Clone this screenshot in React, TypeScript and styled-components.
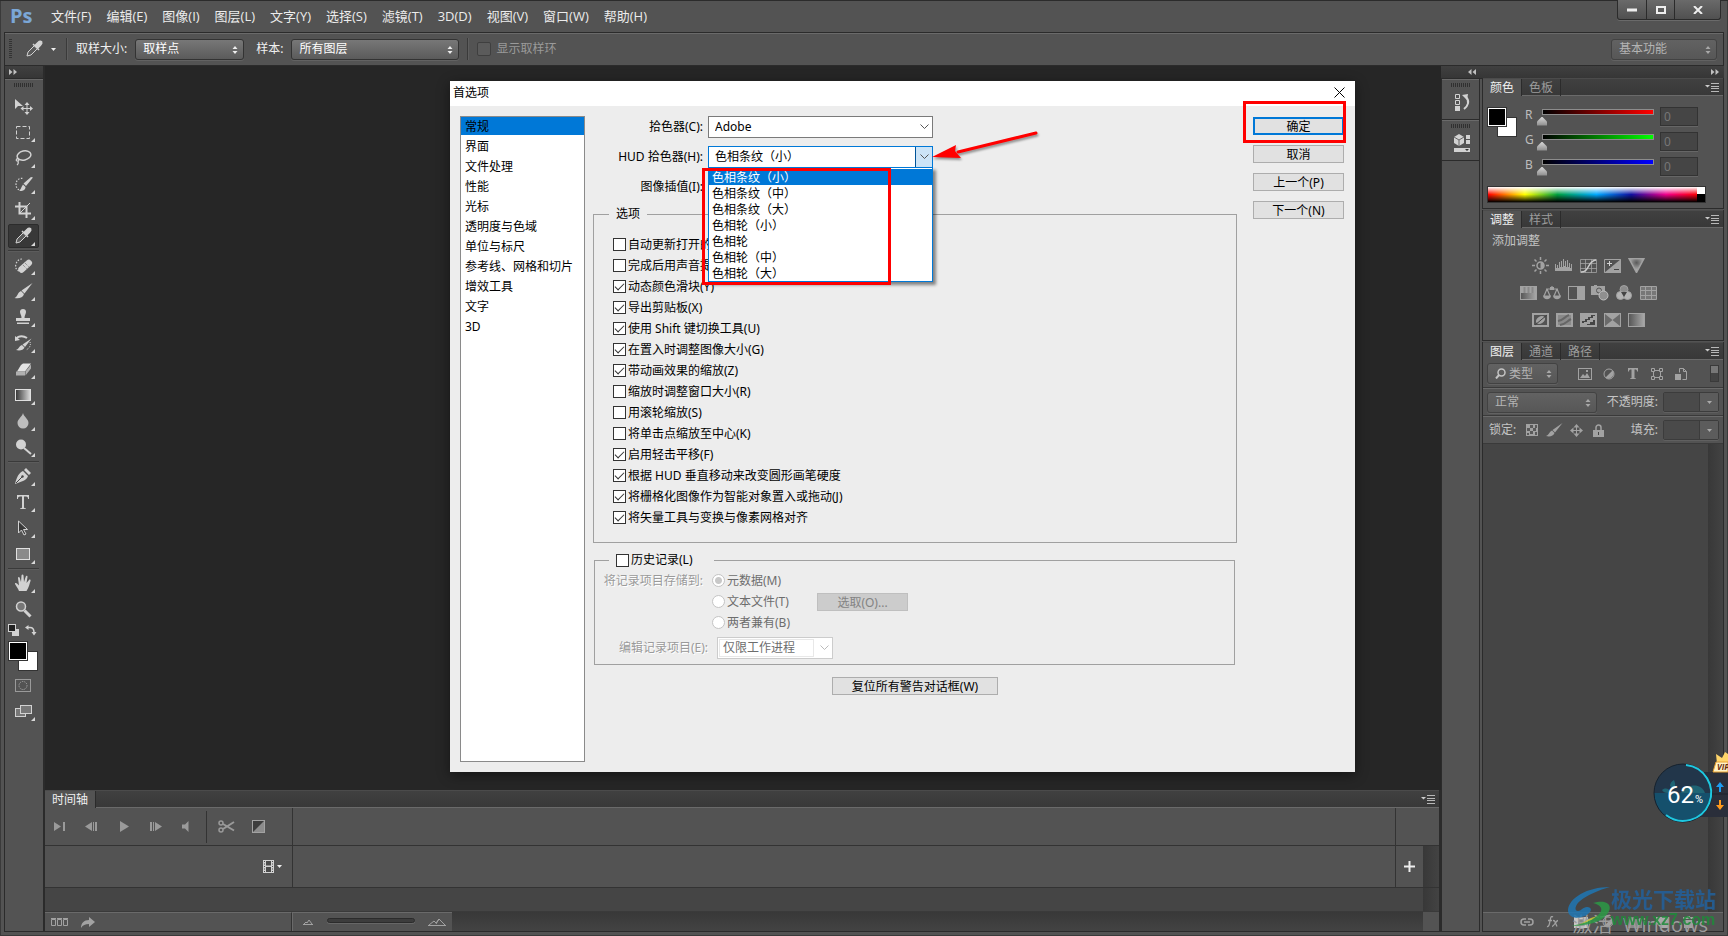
import React from "react";
import styled, { createGlobalStyle, css } from "styled-components";

const GlobalStyle = createGlobalStyle`
  *, *::before, *::after { box-sizing: border-box; }
  html, body { margin: 0; background: #262626; }
  body, button, input, select {
    font-family: "Noto Sans", "Noto Sans CJK SC", sans-serif;
    font-size: 12px;
    line-height: 16px;
  }
  button, input, select, ul, fieldset, legend { margin: 0; padding: 0; }
  ul { list-style: none; }
  svg { display: block; flex: none; }
`;

const line = "#2b2b2b";
const face = "#535353";
const edge = "#6a6a6a";

/* ---------- window frame ---------- */

const Window = styled.div`
  position: relative;
  display: flex;
  flex-direction: column;
  min-height: 100vh;
  padding: 0 4px 4px;
  overflow: hidden;
  background: ${face};
  color: #e8e8e8;
  box-shadow: inset 0 1px 0 #2b2b2b, inset 1px 0 0 #3a3a3a, inset -1px 0 0 #3a3a3a, inset 0 -1px 0 #3a3a3a;
`;

const MenuBar = styled.header`
  display: flex;
  align-items: center;
  height: 32px;
  padding-left: 6px;
`;

const Logo = styled.div`
  width: 41px;
  font: bold 20px/28px "Open Sans", sans-serif;
  color: #7ba7d7;
`;

const Menus = styled.nav`
  display: flex;
  flex: 1;
  gap: 15px;
`;

const MenuItem = styled.button`
  border: 0;
  background: none;
  color: #ececec;
  font-family: "Open Sans", "Noto Sans CJK SC", sans-serif;
  font-size: 13px;
  white-space: nowrap;
`;

const WindowButtons = styled.div`
  display: flex;
  align-self: flex-start;
  height: 20px;
  margin-right: 3px;
  border: 1px solid ${line};
  border-top: 0;
  border-radius: 0 0 3px 3px;
  background: linear-gradient(#6a6a6a, #505050);
  box-shadow: 0 1px 0 ${edge};
`;

const WindowButton = styled.button<{ $wide?: boolean }>`
  display: flex;
  align-items: center;
  justify-content: center;
  width: ${(p) => (p.$wide ? 46 : 28)}px;
  border: 0;
  background: none;
  & + & { border-left: 1px solid ${line}; }
`;

const OptionsBar = styled.div`
  display: flex;
  align-items: center;
  height: 34px;
  padding: 0 6px 0 4px;
  border: 1px solid ${line};
  box-shadow: inset 0 1px 0 ${edge};
`;

const Grip = styled.span<{ $vertical?: boolean }>`
  display: block;
  margin: 0 auto;
  ${(p) =>
    p.$vertical
      ? css`width: 3px; height: 20px; margin: 0; background: repeating-linear-gradient(#333 0 1px, transparent 1px 2px);`
      : css`width: 20px; height: 4px; background: repeating-linear-gradient(90deg, #303030 0 1px, transparent 1px 2px);`}
`;

const VRule = styled.span`
  width: 2px;
  height: 22px;
  margin: 0 8px;
  border-left: 1px solid #3a3a3a;
  border-right: 1px solid #5e5e5e;
`;

const OptionLabel = styled.label<{ $lead?: boolean }>`
  margin: 0 8px 0 ${(p) => (p.$lead ? 12 : 0)}px;
  color: #f0f0f0;
  white-space: nowrap;
`;

const Combo = styled.span<{ $w: number; $dim?: boolean }>`
  position: relative;
  display: block;
  flex: none;
  width: ${(p) => p.$w}px;
  height: 21px;
  border: 1px solid ${(p) => (p.$dim ? "#424242" : "#333")};
  border-radius: 3px;
  background: ${(p) => (p.$dim ? "linear-gradient(#626262, #575757)" : "linear-gradient(#777, #5b5b5b)")};
  box-shadow: 0 1px 0 #626262;
  color: ${(p) => (p.$dim ? "#b4b4b4" : "#fff")};
  svg { position: absolute; right: 4px; top: 5px; pointer-events: none; }
`;

const ComboSelect = styled.select<{ $inset?: number }>`
  display: block;
  width: 100%;
  height: 19px;
  padding: 0 14px 0 ${(p) => p.$inset ?? 7}px;
  border: 0;
  outline: 0;
  appearance: none;
  background: none;
  color: inherit;
`;

const DarkCheck = styled.input`
  width: 14px;
  height: 14px;
  margin: 0 5px 0 0;
  appearance: none;
  border: 1px solid #3f3f3f;
  border-radius: 2px;
  background: #5b5b5b;
`;

const DimLabel = styled.label`
  display: flex;
  align-items: center;
  color: #9a9a9a;
  white-space: nowrap;
`;

const Spacer = styled.span`
  flex: 1;
`;

const BareButton = styled.button`
  display: flex;
  align-items: center;
  justify-content: center;
  border: 0;
  background: none;
  color: inherit;
`;

const PickerButton = styled(BareButton)`
  width: 36px;
  height: 24px;
  gap: 6px;
  margin-left: 10px;
`;

/* ---------- work area ---------- */

const Work = styled.div`
  display: flex;
  flex: 1;
`;

const ToolColumn = styled.aside`
  display: flex;
  flex-direction: column;
  width: 41px;
  border: 1px solid ${line};
  border-top: 0;
  border-right: 2px solid ${line};
`;

const Strip = styled.div<{ $end?: boolean }>`
  display: flex;
  align-items: center;
  justify-content: ${(p) => (p.$end ? "flex-end" : "flex-start")};
  height: 13px;
  padding: 0 4px;
  background: linear-gradient(#404040, #363636);
  border-bottom: 1px solid ${line};
`;

const ToolList = styled.div`
  display: flex;
  flex-direction: column;
  gap: 2px;
  padding: 3px 4px 0 3px;
  border-top: 1px solid ${edge};
`;

const ToolButton = styled.button<{ $on?: boolean; $flyout?: boolean }>`
  position: relative;
  display: flex;
  align-items: center;
  justify-content: center;
  height: 24px;
  padding-right: 2px;
  border: 1px solid ${(p) => (p.$on ? "#2c2c2c" : "transparent")};
  border-radius: 2px;
  background: ${(p) => (p.$on ? "#383838" : "none")};
  ${(p) =>
    p.$flyout &&
    css`
      &::after {
        content: "";
        position: absolute;
        right: 3px;
        bottom: 1px;
        border: 2px solid;
        border-color: transparent #d8d8d8 #d8d8d8 transparent;
      }
    `}
`;

const FirstTool = styled.div`
  height: 3px;
`;

const ToolRule = styled.hr`
  width: 100%;
  height: 2px;
  margin: 0 0 -1px;
  border: 0;
  border-top: 1px solid #3a3a3a;
  border-bottom: 1px solid #5c5c5c;
`;

const SwatchIcons = styled.div`
  display: flex;
  justify-content: space-between;
  padding: 1px 2px 3px 0;
`;

const Swatches = styled.div`
  display: grid;
  grid-template: repeat(3, 10px) / repeat(3, 10px);
`;

const Swatch = styled.button<{ $back?: boolean }>`
  grid-area: ${(p) => (p.$back ? "2 / 2 / 4 / 4" : "1 / 1 / 3 / 3")};
  border: 1px solid #333;
  background: ${(p) => (p.$back ? "#fff" : "#000")};
  box-shadow: ${(p) => (p.$back ? "none" : "inset 0 0 0 1px #fff")};
`;

const Center = styled.div`
  display: flex;
  flex: 1;
  flex-direction: column;
  min-width: 0;
`;

const Canvas = styled.main`
  flex: 1;
  min-height: 400px;
  background: #262626;
`;

/* ---------- tabs shared by panels ---------- */

const TabBar = styled.div`
  display: flex;
  height: 17px;
  background: linear-gradient(#404040, #383838);
  border-bottom: 1px solid ${edge};
  box-shadow: 0 -1px 0 #4b4b4b;
`;

const Tab = styled.button<{ $on?: boolean }>`
  height: 17px;
  padding: 0 7px;
  border: 0;
  border-right: 1px solid ${line};
  background: ${(p) => (p.$on ? face : "none")};
  color: ${(p) => (p.$on ? "#f0f0f0" : "#9c9c9c")};
  white-space: nowrap;
`;

const PanelMenu = styled(BareButton)`
  margin-left: auto;
  padding-right: 4px;
`;

/* ---------- timeline ---------- */

const Timeline = styled.section`
  border: 1px solid ${line};
  border-width: 1px 2px 1px 0;
`;

const Track = styled.div<{ $h: number; $last?: boolean }>`
  display: flex;
  height: ${(p) => p.$h}px;
  border-bottom: 1px solid #333;
`;

const TrackHead = styled.div`
  display: flex;
  align-items: center;
  width: 248px;
  border-right: 1px solid #333;
`;

const Transport = styled(BareButton)<{ $w?: number }>`
  width: ${(p) => p.$w ?? 32}px;
  height: 22px;
`;

const TransportRule = styled.span`
  width: 1px;
  height: 32px;
  margin: 0 6px 0 5px;
  background: #333;
`;

const FilmButton = styled(BareButton)`
  gap: 2px;
  margin-left: auto;
  padding-right: 9px;
`;

const AddCell = styled(BareButton)`
  width: 28px;
  border-left: 1px solid #333;
`;

const ScrollGutter = styled.span<{ $w: number; $plain?: boolean; $ruled?: boolean }>`
  width: ${(p) => p.$w}px;
  align-self: stretch;
  border-left: ${(p) => (p.$ruled ? "1px solid #333" : "0")};
  background: ${(p) => (p.$plain ? face : "linear-gradient(90deg, #383838, #434343)")};
`;

const Lane = styled.div`
  display: flex;
  height: 24px;
  background: #454545;
  border-bottom: 1px solid #3a3a3a;
`;

const TimelineFoot = styled.div`
  display: flex;
  align-items: center;
  height: 19px;
  background: linear-gradient(#383838, #434343);
`;

const FootLeft = styled.div`
  display: flex;
  align-items: center;
  align-self: stretch;
  gap: 13px;
  width: 247px;
  padding-left: 6px;
  background: ${face};
  border-top: 1px solid ${edge};
  border-right: 1px solid #333;
`;

const FootZoom = styled.div`
  display: flex;
  align-items: center;
  align-self: stretch;
  justify-content: space-between;
  width: 160px;
  padding: 0 6px 0 10px;
  background: ${face};
  border-top: 1px solid ${edge};
  border-left: 1px solid ${edge};
`;

const ZoomTrack = styled.input`
  width: 88px;
  height: 5px;
  margin-bottom: 4px;
  appearance: none;
  border: 1px solid #2b2b2b;
  border-radius: 3px;
  background: #3c3c3c;
  box-shadow: 0 1px 0 #666;
  &::-webkit-slider-thumb { appearance: none; width: 0; height: 0; }
`;

/* ---------- right side ---------- */

const Right = styled.aside`
  display: flex;
  flex-direction: column;
`;

const RightStrip = styled(Strip)`
  justify-content: space-between;
  padding: 0 5px 0 27px;
`;

const RightColumns = styled.div`
  display: flex;
  flex: 1;
`;

const Dock = styled.div`
  width: 39px;
  border: 1px solid ${line};
  border-width: 0 1px 1px 1px;
`;

const DockGroup = styled.div`
  height: 41px;
  padding-top: 3px;
  border-top: 1px solid ${edge};
  border-bottom: 1px solid ${line};
`;

const DockButton = styled(BareButton)`
  width: 100%;
  height: 29px;
  padding-left: 2px;
`;

const Panels = styled.div`
  display: flex;
  flex-direction: column;
  gap: 1px;
  width: 242px;
  margin: -1px 0 0 2px;
`;

const Panel = styled.section<{ $grow?: boolean }>`
  display: flex;
  flex: ${(p) => (p.$grow ? "1" : "none")};
  flex-direction: column;
  border: 1px solid ${line};
`;

const ColorBody = styled.div`
  padding: 11px 25px 5px 4px;
`;

const ColorTop = styled.div`
  display: flex;
  align-items: flex-start;
  height: 79px;
`;

const Channels = styled.div`
  flex: 1;
  margin-left: 8px;
`;

const Channel = styled.label`
  display: grid;
  grid-template-columns: 12px 1fr 38px;
  align-items: start;
  height: 25px;
  color: #bdbdbd;
`;

const ChannelSlider = styled.input<{ $color: string }>`
  width: calc(100% - 1px);
  height: 18px;
  margin-top: 2px;
  appearance: none;
  outline: 0;
  background:
    linear-gradient(90deg, #000, ${(p) => p.$color}) 6px 1px / calc(100% - 12px) 4px no-repeat,
    linear-gradient(#8c8c8c, #8c8c8c) 5px 0 / calc(100% - 10px) 6px no-repeat;
  &::-webkit-slider-thumb {
    appearance: none;
    width: 10px;
    height: 9px;
    margin-top: 6px;
    background: linear-gradient(#d8d8d8, #8a8a8a);
    clip-path: polygon(50% 0, 100% 55%, 100% 100%, 0 100%, 0 55%);
  }
`;

const NumberBox = styled.input`
  width: 38px;
  height: 19px;
  padding: 0 3px;
  border: 1px solid #333;
  background: #454545;
  color: #777;
  box-shadow: 0 1px 0 #666;
`;

const Spectrum = styled.div`
  width: 219px;
  height: 17px;
  border: 1px solid #333;
  background:
    linear-gradient(#fff 50%, #000 50%) right / 8px 100% no-repeat,
    linear-gradient(#fff, rgba(255, 255, 255, 0) 50%, rgba(0, 0, 0, 0) 50%, #000),
    linear-gradient(90deg, #f00, #ff0 17%, #00a040 32%, #00a8ff 50%, #1010a0 66%, #f0008c 82%, #f00 97%);
`;

const AdjustBody = styled.div`
  height: 112px;
  padding: 5px 0 0 9px;
  color: #c4c4c4;
`;

const AdjustTitle = styled.div`
  margin-bottom: 3px;
`;

const AdjustRow = styled.div<{ $indent: number }>`
  display: flex;
  height: 27px;
  align-items: center;
  padding-left: ${(p) => p.$indent}px;
`;

const IconButton = styled(BareButton)<{ $w?: number }>`
  width: ${(p) => p.$w ?? 24}px;
  height: 22px;
`;

const LayerRow = styled.div`
  display: flex;
  align-items: center;
  height: 28px;
  padding: 0 4px;
  border-bottom: 1px solid #3a3a3a;
  color: #c4c4c4;
  & + & { border-top: 1px solid ${edge}; }
`;

const FilterCombo = styled(Combo)`
  svg:first-child { left: 7px; right: auto; top: 4px; }
`;

const FilterIcons = styled.div`
  display: flex;
  margin-left: 15px;
`;

const FilterSwitch = styled.button`
  width: 9px;
  height: 17px;
  margin-left: auto;
  border: 1px solid #3a3a3a;
  background: linear-gradient(#777 45%, #444 45%);
`;

const FieldLabel = styled.label`
  margin-left: auto;
  padding-right: 5px;
  white-space: nowrap;
`;

const Stepper = styled.span`
  display: flex;
  width: 56px;
  height: 20px;
  border: 1px solid #3c3c3c;
  border-radius: 2px;
  box-shadow: 0 1px 0 #606060;
`;

const StepperInput = styled.input`
  width: 35px;
  border: 0;
  background: #4a4a4a;
`;

const StepperButton = styled(BareButton)`
  flex: 1;
  border-left: 1px solid #3c3c3c;
  background: #5c5c5c;
`;

const LockLabel = styled.span`
  padding-left: 2px;
`;

const LockIcons = styled.div`
  display: flex;
  margin-left: 5px;
`;

const LayerList = styled.div`
  display: flex;
  flex: 1;
  justify-content: flex-end;
  background: #454545;
`;

const LayerFoot = styled.div`
  display: flex;
  align-items: center;
  height: 19px;
  padding-left: 30px;
  border-top: 1px solid ${edge};
`;

const FootButton = styled(BareButton)`
  width: 27px;
  height: 16px;
`;

/* ---------- preferences dialog ---------- */

const Dialog = styled.section`
  position: absolute;
  left: 450px;
  top: 81px;
  width: 905px;
  background: #ededed;
  color: #000;
  box-shadow: 0 3px 12px rgba(0, 0, 0, 0.45);
`;

const DialogHead = styled.div`
  display: flex;
  align-items: center;
  justify-content: space-between;
  height: 25px;
  padding: 0 10px 2px 3px;
  background: #fff;
`;

const DialogTitle = styled.h1`
  margin: 0;
  font-size: 12px;
  font-weight: 400;
  line-height: 20px;
`;

const DialogBody = styled.div`
  display: flex;
  align-items: stretch;
  padding: 10px 11px 10px 10px;
`;

const Sections = styled.ul`
  display: flex;
  flex-direction: column;
  gap: 2px;
  width: 125px;
  min-height: 646px;
  border: 1px solid #8a8a8a;
  background: #fff;
`;

const SectionItem = styled.button<{ $on?: boolean }>`
  display: block;
  width: 100%;
  height: 18px;
  padding: 2px 4px 0;
  border: 0;
  background: ${(p) => (p.$on ? "#0078d7" : "none")};
  color: #000;
  text-align: left;
`;

const Main = styled.div`
  display: flex;
  flex: 1;
  flex-direction: column;
  margin: 0 16px 0 8px;
`;

const FormRow = styled.div`
  display: flex;
  align-items: center;
  gap: 5px;
  height: 22px;
  margin-bottom: 8px;
`;

const FormLabel = styled.label`
  width: 110px;
  text-align: right;
  white-space: nowrap;
`;

const Picker = styled.div<{ $open?: boolean; $w: number; $dim?: boolean }>`
  position: relative;
  display: flex;
  width: ${(p) => p.$w}px;
  height: 22px;
  border: 1px solid ${(p) => (p.$open ? "#0078d7" : p.$dim ? "#ccc" : "#7a7a7a")};
  background: #fff;
`;

const PickerSelect = styled.select<{ $boxed?: boolean }>`
  flex: 1;
  min-width: 0;
  padding: 0 0 0 ${(p) => (p.$boxed ? 3 : 6)}px;
  margin: ${(p) => (p.$boxed ? "1px" : "0")};
  border: ${(p) => (p.$boxed ? "1px solid #e8e8e8" : "0")};
  outline: 0;
  appearance: none;
  background: none;
  color: ${(p) => (p.$boxed ? "#6d6d6d" : "#000")};
  opacity: 1;
`;

const PickerArrow = styled.span<{ $open?: boolean }>`
  display: flex;
  align-items: center;
  justify-content: center;
  width: 17px;
  background: ${(p) => (p.$open ? "#cce4f7" : "none")};
  border-left: 1px solid ${(p) => (p.$open ? "#005499" : "transparent")};
`;

const Popup = styled.ul`
  position: absolute;
  z-index: 1;
  top: 20px;
  left: -1px;
  width: 225px;
  padding-top: 1px;
  border: 1px solid #0078d7;
  background: #fff;
  box-shadow: 3px 3px 3px rgba(0, 0, 0, 0.45);
`;

const PopupItem = styled.li<{ $on?: boolean }>`
  height: 16px;
  padding-left: 3px;
  background: ${(p) => (p.$on ? "#0078d7" : "none")};
  color: ${(p) => (p.$on ? "#fff" : "#000")};
  line-height: 18px;
`;

const Group = styled.fieldset`
  min-width: 0;
  border: 1px solid #a0a0a0;
`;

const OptionGroup = styled(Group)`
  margin-top: -1px;
  padding: 11px 19px 14px;
`;

const HistoryGroup = styled(Group)`
  margin: 8px 2px 0 1px;
  padding: 1px 0 5px;
`;

const Legend = styled.legend<{ $w?: number }>`
  display: flex;
  align-items: center;
  width: ${(p) => (p.$w ? `${p.$w}px` : "auto")};
  height: 18px;
  padding: 0 7px;
`;

const OptionLegend = styled(Legend)`
  margin-left: -4px;
`;

const HistoryLegend = styled(Legend)`
  margin-left: 14px;
`;

const CheckRow = styled.label`
  display: flex;
  align-items: center;
  gap: 2px;
  height: 21px;
  white-space: nowrap;
`;

const tick = css`
  &:checked::before {
    content: "";
    display: block;
    width: 9px;
    height: 5px;
    margin: 2px 0 0 1px;
    border: solid #333;
    border-width: 0 0 1px 1px;
    transform: rotate(-45deg);
  }
`;

const Check = styled.input`
  flex: none;
  width: 13px;
  height: 13px;
  margin: 0;
  appearance: none;
  border: 1px solid #333;
  background: #fff;
  ${tick}
`;

const HistoryRow = styled.div<{ $late?: boolean }>`
  display: flex;
  align-items: center;
  height: ${(p) => (p.$late ? 22 : 21)}px;
  margin-top: ${(p) => (p.$late ? 4 : 0)}px;
`;

const HistoryLabel = styled.span<{ $w: number; $gap?: number }>`
  width: ${(p) => p.$w}px;
  margin-right: ${(p) => p.$gap ?? 9}px;
  color: #9a9a9a;
  text-align: right;
  text-shadow: 1px 1px 0 #fff;
  white-space: nowrap;
`;

const RadioLabel = styled.label`
  display: flex;
  align-items: center;
  gap: 2px;
  width: 105px;
  color: #6d6d6d;
  white-space: nowrap;
`;

const Radio = styled.input`
  width: 13px;
  height: 13px;
  margin: 0;
  appearance: none;
  border: 1px solid #c4c4c4;
  border-radius: 50%;
  background: #fff;
  &:checked { background: radial-gradient(circle, #c8c8c8 3px, #fff 4px); }
`;

const PushButton = styled.button<{ $w: number; $main?: boolean }>`
  width: ${(p) => p.$w}px;
  height: 18px;
  padding-top: 2px;
  border: ${(p) => (p.$main ? "2px solid #0078d7" : "1px solid #adadad")};
  background: #e1e1e1;
  color: #000;
  line-height: ${(p) => (p.$main ? 12 : 14)}px;
  white-space: nowrap;
  &:disabled { border-color: #bfbfbf; background: #ccc; color: #838383; }
`;

const ResetButton = styled(PushButton)`
  align-self: center;
  margin-top: 12px;
`;

const Actions = styled.div`
  display: flex;
  flex-direction: column;
  gap: 10px;
  padding-top: 1px;
`;

const Marker = styled.span<{ $x: number; $y: number; $w: number; $h: number }>`
  position: absolute;
  z-index: 2;
  left: ${(p) => p.$x}px;
  top: ${(p) => p.$y}px;
  width: ${(p) => p.$w}px;
  height: ${(p) => p.$h}px;
  border: 3px solid #f00;
  pointer-events: none;
`;

const PointerArrow = styled.svg`
  position: absolute;
  left: 480px;
  top: 45px;
  filter: drop-shadow(1px 2px 1px rgba(0, 0, 0, 0.4));
`;

/* ---------- floating things ---------- */

const Meter = styled.div`
  position: absolute;
  right: 0;
  bottom: 108px;
  width: 76px;
  height: 78px;
`;

const MeterArt = styled.svg`
  position: absolute;
  inset: 0;
`;

const MeterText = styled.span`
  position: absolute;
  left: 15px;
  top: 29px;
  color: #fff;
  font: 24px/32px Roboto, sans-serif;
  small { padding-left: 1px; font-size: 11px; }
`;

const VipText = styled.span`
  position: absolute;
  left: 65px;
  top: 12px;
  width: 11px;
  overflow: hidden;
  color: #6b2d0c;
  font: italic bold 8px/10px "Open Sans", sans-serif;
`;

const Notice = styled.p`
  position: absolute;
  right: 20px;
  bottom: -3px;
  margin: 0;
  color: #9d9d9d;
  font: 20px/28px "Open Sans", "Noto Sans CJK SC", sans-serif;
  white-space: pre;
`;

const SiteMark = styled.div`
  position: absolute;
  right: 12px;
  bottom: 7px;
  display: flex;
  align-items: center;
  opacity: 0.85;
`;

const SiteName = styled.div`
  color: #22619c;
  font: bold 21px/26px "Noto Sans CJK SC", sans-serif;
  white-space: nowrap;
`;

const SiteUrl = styled.div`
  color: #1f8a3a;
  font: bold 16px/18px "Liberation Sans", sans-serif;
`;

/* ---------- icons ---------- */

const c = "#d2d2d2";

type IconProps = { size?: number; children: React.ReactNode; h?: number };
const Icon = ({ size = 20, h, children }: IconProps) => (
  <svg width={size} height={h ?? size} viewBox={`0 0 ${size} ${h ?? size}`} fill="none" aria-hidden="true">
    {children}
  </svg>
);

const Eyedropper = () => (
  <Icon>
    <path d="M3 17l1-4 7-7 3 3-7 7z" stroke={c} fill="#5a5a5a" />
    <path d="M9 5l6 6M11.500 6l3-3c1-1.300 3-1 3.300.2.500 1-.1 1.800-1.300 3l-3 3z" stroke={c} strokeWidth="1.500" fill={c} />
  </Icon>
);

const tools: Record<string, React.ReactNode> = {
  move: (
    <Icon>
      <path d="M2 3v10l3-3h5z" fill={c} />
      <path d="M14 8v9M9.500 12.500h9" stroke={c} />
      <path d="M14 6l-2.500 3h5zM14 19l-2.500-3h5zM7.500 12.500l3-2.500v5zM20 12.500l-3-2.500v5z" fill={c} />
    </Icon>
  ),
  marquee: (
    <Icon>
      <rect x="3.500" y="4.500" width="13" height="12" stroke={c} strokeDasharray="4 2" />
    </Icon>
  ),
  lasso: (
    <Icon>
      <ellipse cx="11" cy="7.500" rx="7" ry="4.500" stroke={c} strokeWidth="1.500" transform="rotate(-12 11 7.500)" />
      <path d="M5 10c-2 1-2.500 3-.5 3s1.500-2 0-2M5 13c.5 1.500.5 3-1 4" stroke={c} strokeWidth="1.200" />
    </Icon>
  ),
  quick: (
    <Icon>
      <path d="M9 15.500c-3 1.500-6-1-6-5s3-7 7-6" stroke={c} strokeWidth="1.200" strokeDasharray="1.500 1.500" />
      <path d="M20 3.500l-7 8.500-2.500-2.500L18 3zM10 10.500l2.500 2.500c0 3-3 4.500-6.500 4 2-1 2-4 4-6.500z" fill={c} />
    </Icon>
  ),
  crop: (
    <Icon>
      <path d="M6.500 2v11.500H18M2 6.500h11.500V18" stroke={c} strokeWidth="2" />
      <path d="M7 13L17 3" stroke={c} />
    </Icon>
  ),
  picker: <Eyedropper />,
  heal: (
    <Icon>
      <path d="M6 16c-3-1-4-4-3-7s3-5 6-5" stroke={c} strokeWidth="1.200" strokeDasharray="1.500 1.500" />
      <rect x="4" y="8" width="16" height="6.500" rx="3" fill={c} transform="rotate(-42 12 11)" />
      <path d="M10 10l4 4M12 8l4 4" stroke="#777" strokeDasharray="1 1" />
    </Icon>
  ),
  brush: (
    <Icon>
      <path d="M19.500 2L11.500 12.500l-3-3zM8 10l3 3c-1 4-5.500 5-9.500 4 3-1 3-5.500 6.500-7z" fill={c} />
    </Icon>
  ),
  stamp: (
    <Icon>
      <path d="M10 2a3 3 0 013 3c0 2-1.500 3-1.500 6H17v3H3v-3h5.500C8.500 8 7 7 7 5a3 3 0 013-3zM4 15.500h12V17H4z" fill={c} />
    </Icon>
  ),
  history: (
    <Icon>
      <path d="M3 6c3-4 8-3 11-1" stroke={c} strokeWidth="2" />
      <path d="M2 3v5l5-1zM18.500 5.500L12 14l-2.500-2.500zM9 12l2.500 2.500c-1 3-5.500 3.500-8.500 2.500 3-1 3-4 6-5z" fill={c} />
      <path d="M17 9c1 3 0 6-4 8" stroke={c} strokeDasharray="1 1" />
    </Icon>
  ),
  eraser: (
    <Icon>
      <path d="M8 6l2-1.500h8l-6 8H4z" fill="#e2e2e2" />
      <path d="M3 12.500h9v4H3zM12.500 12.500L18 5.500v4l-5.500 7z" fill="#b0b0b0" />
    </Icon>
  ),
  gradient: (
    <Icon>
      <defs>
        <linearGradient id="gr">
          <stop stopColor="#333" />
          <stop offset="1" stopColor="#ddd" />
        </linearGradient>
      </defs>
      <rect x="2.500" y="4.500" width="15" height="11" fill="url(#gr)" stroke="#e0e0e0" />
    </Icon>
  ),
  blur: (
    <Icon>
      <path d="M10 2c1 4 5.500 6 5.500 10a5.500 5.500 0 01-11 0c0-4 4.500-6 5.500-10z" fill="#bdbdbd" />
    </Icon>
  ),
  dodge: (
    <Icon>
      <circle cx="8" cy="7.500" r="5" fill={c} />
      <path d="M11 11l7 6" stroke={c} strokeWidth="2" />
    </Icon>
  ),
  pen: (
    <Icon>
      <path d="M13 2l5 5-2 2-5-5zM10 5l5 5c-1 4-5 5-13 8 2-8 4-11 8-13z" fill={c} />
      <path d="M3 17l6-6" stroke="#444" />
      <circle cx="9.500" cy="10.500" r="1.200" fill="#444" />
    </Icon>
  ),
  type: (
    <Icon>
      <path d="M4 3h12v4h-1c0-2-.5-2.500-4-2.500V15c0 1 .5 1.300 2 1.500v.5H7v-.5c1.500-.2 2-.5 2-1.500V4.500C5.500 4.500 5 5 5 7H4z" fill={c} />
    </Icon>
  ),
  select: (
    <Icon>
      <path d="M5.500 3v12l3-3 2.500 5 2-1-2.500-4.500h4z" fill="#3a3a3a" stroke={c} />
    </Icon>
  ),
  shape: (
    <Icon>
      <rect x="3.500" y="4.500" width="13" height="11" fill="#8a8a8a" stroke="#e0e0e0" />
    </Icon>
  ),
  hand: (
    <Icon>
      <path d="M6 18c-1-3-3-5-4-7-.3-1 1-1.500 2-.5l2 2L5 5c0-1.300 1.500-1.300 1.800 0L8 9l.5-6.500c.2-1.300 1.800-1.300 2 0L11 9l1.800-5.500c.4-1.200 1.900-.8 1.700.5L13.500 10l2.500-3c.8-1 2-.2 1.500 1-1 3-1.500 6-4 10z" fill={c} />
    </Icon>
  ),
  zoom: (
    <Icon>
      <circle cx="8" cy="7.500" r="4.500" fill="#777" stroke={c} strokeWidth="1.500" />
      <path d="M11.500 11.500l6 6" stroke={c} strokeWidth="3" />
    </Icon>
  ),
  mask: (
    <Icon>
      <rect x="2.500" y="4.500" width="15" height="12" stroke="#9a9a9a" />
      <circle cx="10" cy="10.500" r="4" stroke="#b4b4b4" strokeDasharray="1 1.200" />
    </Icon>
  ),
  screen: (
    <Icon>
      <rect x="2.500" y="7.500" width="10" height="8" fill="#777" stroke={c} />
      <rect x="7.500" y="4.500" width="11" height="8" fill="#777" stroke={c} />
    </Icon>
  ),
};

const ComboArrows = ({ dim }: { dim?: boolean }) => (
  <Icon size={8} h={10}>
    <path d="M4 1l2.500 3h-5zM4 9l2.500-3h-5z" fill={dim ? "#a8a8a8" : "#eee"} />
  </Icon>
);
const DownArrow = ({ color = "#eee" }: { color?: string }) => (
  <Icon size={7} h={5}>
    <path d="M1 1h5L3.500 4z" fill={color} />
  </Icon>
);
const DoubleChevron = ({ left }: { left?: boolean }) => (
  <Icon size={8} h={6}>
    <path d={left ? "M3.500 0v6L0 3zM8 0v6L4.500 3z" : "M0 0v6l3.500-3zM4.500 0v6L8 3z"} fill="#c0c0c0" />
  </Icon>
);
const Chevron = ({ dim }: { dim?: boolean }) => (
  <Icon size={9} h={6}>
    <path d="M.5.500l4 4 4-4" stroke={dim ? "#bbb" : "#555"} />
  </Icon>
);
const MenuLines = () => (
  <Icon size={14} h={9}>
    <path d="M0 2h5L2.500 4.500z" fill="#ccc" />
    <path d="M6 .5h8M6 3.500h8M6 5.500h8M6 8.500h8" stroke="#b8b8b8" />
  </Icon>
);

const g = "#a2a2a2";
const adjust: Record<string, React.ReactNode> = {
  brightness: (
    <Icon size={17}>
      <circle cx="8.500" cy="8.500" r="3.500" stroke={g} strokeWidth="1.500" />
      <path d="M8.500 5a3.500 3.500 0 010 7z" fill={g} />
      <path d="M8.500 0v3M8.500 14v3M0 8.500h3M14 8.500h3M2.500 2.500l2 2M12.500 12.500l2 2M2.500 14.500l2-2M12.500 4.500l2-2" stroke={g} strokeWidth="1.500" />
    </Icon>
  ),
  levels: (
    <Icon size={18} h={13}>
      <path d="M0 12V5h1v4h1V6h1v3h1V3h1v5h1V2h1v6h1V0h1v7h1V2h1v6h1V1h1v7h1V4h1v5h1V5h1v7z" fill={g} />
    </Icon>
  ),
  curves: (
    <Icon size={17} h={14}>
      <path d="M.5.500h16v13H.5zM5.500 0v14M11.500 0v14M0 4.500h17M0 9.500h17" stroke={g} strokeOpacity=".8" />
      <path d="M1 13c9 0 6-11 15-12" stroke="#ccc" strokeWidth="1.500" />
    </Icon>
  ),
  exposure: (
    <Icon size={17} h={14}>
      <path d="M.5.500h16v13H.5z" stroke={g} />
      <path d="M17 0v14H0z" fill={g} />
      <path d="M3 4.500h5M5.500 2v5" stroke={c} />
      <path d="M10 10.500h5" stroke="#444" />
    </Icon>
  ),
  vibrance: (
    <Icon size={17} h={15}>
      <defs>
        <radialGradient id="vb" cx=".5" cy=".3" r=".5">
          <stop stopColor="#5a5a5a" />
          <stop offset="1" stopColor="#a8a8a8" />
        </radialGradient>
      </defs>
      <path d="M1 .5h15L8.500 14.500z" fill="url(#vb)" stroke={g} strokeWidth="1.500" />
    </Icon>
  ),
  hue: (
    <Icon size={17} h={14}>
      <defs>
        <linearGradient id="hs">
          <stop stopColor="#555" />
          <stop offset="1" stopColor="#aaa" />
        </linearGradient>
      </defs>
      <rect x=".5" y=".5" width="16" height="13" fill="url(#hs)" stroke={g} />
      <path d="M1 4h15" stroke={g} strokeWidth="6" />
      <path d="M4.500 1v6M8.500 1v6M12.500 1v6" stroke="#888" strokeWidth="2" />
    </Icon>
  ),
  balance: (
    <Icon size={18} h={14}>
      <path d="M3 3h12M9 0v4M4 3l-3 7M4 3l3 7M14 3l-3 7M14 3l3 7" stroke={g} strokeWidth="1.200" />
      <path d="M0 9.500h8c0 5-8 5-8 0zM10 9.500h8c0 5-8 5-8 0zM7 1h4v3H7z" fill={g} />
    </Icon>
  ),
  bw: (
    <Icon size={17} h={14}>
      <rect x=".5" y=".5" width="16" height="13" stroke={g} />
      <path d="M9 0h8v14H9z" fill={g} />
    </Icon>
  ),
  photo: (
    <Icon size={18} h={16}>
      <path d="M0 1h3V0h3v1h8v9H0z" fill={g} />
      <circle cx="8" cy="5.500" r="2.500" stroke="#555" />
      <circle cx="12.500" cy="10.500" r="4.500" fill="#8f8f8f" stroke="#c0c0c0" />
    </Icon>
  ),
  mixer: (
    <Icon size={16} h={16}>
      <circle cx="8" cy="4.500" r="4" fill="#8c8c8c" stroke={g} />
      <circle cx="4.500" cy="10.500" r="4" fill="#b4b4b4" stroke={g} />
      <circle cx="11.500" cy="10.500" r="4" fill="#b4b4b4" stroke={g} />
      <path d="M5 7h6l-3 5z" fill="#444" />
    </Icon>
  ),
  lookup: (
    <Icon size={17} h={14}>
      <path d="M.5.500h16v13H.5z" fill="#777" stroke={g} />
      <path d="M5.500 0v14M11.500 0v14M0 4.500h17M0 9.500h17" stroke={g} />
    </Icon>
  ),
  invert: (
    <Icon size={17} h={14}>
      <path d="M1 1h15v12H1z" stroke={g} strokeWidth="2" />
      <ellipse cx="8.500" cy="7" rx="5" ry="3.500" fill={g} transform="rotate(-35 8.500 7)" />
      <path d="M3 12L15 2" stroke="#444" />
    </Icon>
  ),
  posterize: (
    <Icon size={17} h={14}>
      <path d="M1 1h15v12H1z" fill="#8a8a8a" stroke={g} strokeWidth="2" />
      <path d="M2 8c6-1 6-4 11-6M4 12c6-1 7-4 11-6" stroke="#666" strokeWidth="2" />
    </Icon>
  ),
  threshold: (
    <Icon size={17} h={14}>
      <path d="M0 0h17v14H0z" fill={g} />
      <path d="M2 8h3V6h3V4h3V2h4v1h-2v2h-3v2H7v2H4v1H2zM7 12v-1h3V9h3V7h2v5z" fill="#444" />
    </Icon>
  ),
  selective: (
    <Icon size={17} h={14}>
      <rect x=".5" y=".5" width="16" height="13" fill="#6a6a6a" stroke={g} />
      <path d="M1 1h15L8.500 7zM1 13h15L8.500 7z" fill={g} />
    </Icon>
  ),
  map: (
    <Icon size={17} h={14}>
      <defs>
        <linearGradient id="gm">
          <stop stopColor="#555" />
          <stop offset="1" stopColor="#aaa" />
        </linearGradient>
      </defs>
      <rect x=".5" y=".5" width="16" height="13" fill="url(#gm)" stroke={g} />
    </Icon>
  ),
};

const small: Record<string, React.ReactNode> = {
  image: (
    <Icon size={14} h={12}>
      <rect x=".5" y=".5" width="13" height="11" stroke={g} />
      <path d="M2 10l3-4 2 2 2-3 3 5z" fill={g} />
      <rect x="8" y="2" width="2" height="2" fill={g} />
    </Icon>
  ),
  adj: (
    <Icon size={12}>
      <circle cx="6" cy="6" r="5" stroke={g} />
      <path d="M9.500 2.500A5 5 0 012.500 9.500z" fill={g} />
    </Icon>
  ),
  t: (
    <Icon size={12}>
      <path d="M1 0h10v3.500h-1C10 2 9.500 1.500 7.500 1.500V10l1.500.5V11H3v-.5l1.500-.5V1.500C2.500 1.500 2 2 2 3.500H1z" fill={g} />
    </Icon>
  ),
  vector: (
    <Icon size={12}>
      <path d="M2.500 2.500h7v7h-7z" stroke={g} />
      <path d="M.5.500h3v3h-3zM8.500.500h3v3h-3zM.5 8.500h3v3h-3zM8.500 8.500h3v3h-3z" fill={face} stroke={g} />
    </Icon>
  ),
  smart: (
    <Icon size={12}>
      <path d="M4.500.500h4l3 3v8h-4M4.500.500v4M8.500.500v3h3" stroke={g} />
      <path d="M0 6h6v6H0z" fill={g} />
    </Icon>
  ),
  pixels: (
    <Icon size={12}>
      <path d="M0 0h12v12H0z" fill={g} />
      <path d="M4 1h3v3H4zM1 4h3v3H1zM7 4h3v3H7zM4 7h3v3H4zM9 1h2v3H9zM9 8h2v3H9zM1 9h2v2H1z" fill="#5a5a5a" />
    </Icon>
  ),
  lockBrush: (
    <Icon size={17} h={14}>
      <path d="M16.500 0L9 9.500 6.500 7zM6 7.500L8.500 10c-1 3-4.500 4-8.500 3 3-1 3-4 6-5.500z" fill={g} />
    </Icon>
  ),
  lockMove: (
    <Icon size={13}>
      <path d="M6.500 1v11M1 6.500h11" stroke={g} />
      <path d="M6.500 0l3 3.500h-6zM6.500 13l3-3.500h-6zM0 6.500l3.500-3v6zM13 6.500l-3.500-3v6z" fill={g} />
    </Icon>
  ),
  lock: (
    <Icon size={11} h={13}>
      <path d="M3 6V3.500a2.500 2.500 0 015 0V6" stroke={g} strokeWidth="1.500" />
      <path d="M0 6h11v7H0z" fill={g} />
      <path d="M5.500 8v3" stroke="#444" />
    </Icon>
  ),
  link: (
    <Icon size={14} h={8}>
      <path d="M6 7H4a3 3 0 010-6h2M8 1h2a3 3 0 010 6H8M4 4h6" stroke={g} strokeWidth="1.500" />
    </Icon>
  ),
  fx: (
    <Icon size={16} h={12}>
      <path d="M7 1C5-.5 4.500 2 4 5S3 11 1 10.500M2 4.500h4M7 4.500l1.500.3L11 10.500M12 4.500c-2 0-4 6-6 6" stroke={g} strokeWidth="1.300" />
    </Icon>
  ),
  layerMask: (
    <Icon size={14} h={11}>
      <path d="M0 0h14v11H0z" fill="#c8c8c8" />
      <circle cx="7" cy="5.500" r="3" fill="#888" />
    </Icon>
  ),
  folder: (
    <Icon size={14} h={11}>
      <path d="M0 0h6l1 2h7v9H0z" fill="#888" />
    </Icon>
  ),
  page: (
    <Icon size={12} h={11}>
      <path d="M0 0h12v11H5L0 6z" fill="#aaa" />
    </Icon>
  ),
  trash: (
    <Icon size={11} h={12}>
      <path d="M0 1h11v2H0zM1 4h9v8H1zM4 0h3v1H4z" fill={g} />
    </Icon>
  ),
};

const Play = ({ d, w = 13 }: { d: string; w?: number }) => (
  <Icon size={w} h={11}>
    <path d={d} fill="#9a9a9a" />
  </Icon>
);

/* ---------- data ---------- */

const menus = ["文件(F)", "编辑(E)", "图像(I)", "图层(L)", "文字(Y)", "选择(S)", "滤镜(T)", "3D(D)", "视图(V)", "窗口(W)", "帮助(H)"];

const toolGroups: [string, string][][] = [
  [["move", "移动"], ["marquee", "选框"], ["lasso", "套索"], ["quick", "快速选择"], ["crop", "裁剪"], ["picker", "吸管"]],
  [["heal", "修复"], ["brush", "画笔"], ["stamp", "图章"], ["history", "历史画笔"], ["eraser", "橡皮擦"], ["gradient", "渐变"], ["blur", "模糊"], ["dodge", "减淡"]],
  [["pen", "钢笔"], ["type", "文字"], ["select", "路径选择"], ["shape", "矩形"]],
  [["hand", "抓手"], ["zoom", "缩放"]],
];

const sections = ["常规", "界面", "文件处理", "性能", "光标", "透明度与色域", "单位与标尺", "参考线、网格和切片", "增效工具", "文字", "3D"];
const hudChoices = ["色相条纹（小）", "色相条纹（中）", "色相条纹（大）", "色相轮（小）", "色相轮", "色相轮（中）", "色相轮（大）"];
const options: [string, boolean][] = [
  ["自动更新打开的文档(A)", false],
  ["完成后用声音提示(D)", false],
  ["动态颜色滑块(Y)", true],
  ["导出剪贴板(X)", true],
  ["使用 Shift 键切换工具(U)", true],
  ["在置入时调整图像大小(G)", true],
  ["带动画效果的缩放(Z)", true],
  ["缩放时调整窗口大小(R)", false],
  ["用滚轮缩放(S)", false],
  ["将单击点缩放至中心(K)", false],
  ["启用轻击平移(F)", true],
  ["根据 HUD 垂直移动来改变圆形画笔硬度", true],
  ["将栅格化图像作为智能对象置入或拖动(J)", true],
  ["将矢量工具与变换与像素网格对齐", true],
];
const channels: [string, string][] = [["R", "#f00"], ["G", "#0f0"], ["B", "#00f"]];
const adjustRows: [number, string[]][] = [
  [36, ["brightness", "levels", "curves", "exposure", "vibrance"]],
  [24, ["hue", "balance", "bw", "photo", "mixer", "lookup"]],
  [36, ["invert", "posterize", "threshold", "selective", "map"]],
];

/* ---------- parts ---------- */

function PanelTabs({ names }: { names: string[] }) {
  return (
    <TabBar>
      {names.map((n, i) => (
        <Tab key={n} $on={i === 0}>{n}</Tab>
      ))}
      <PanelMenu aria-label="面板菜单"><MenuLines /></PanelMenu>
    </TabBar>
  );
}

function ToolPalette() {
  return (
    <ToolColumn>
      <Strip><DoubleChevron /></Strip>
      <ToolList>
        <Grip />
        <FirstTool />
        {toolGroups.map((group, i) => (
          <React.Fragment key={i}>
            {i > 0 && <ToolRule />}
            {group.map(([id, name]) => (
              <ToolButton key={id} aria-label={name} $on={id === "picker"} $flyout={id !== "move" && id !== "zoom"}>
                {tools[id]}
              </ToolButton>
            ))}
          </React.Fragment>
        ))}
        <SwatchIcons>
          <BareButton aria-label="默认颜色">
            <Icon size={11} h={12}>
              <path d="M4 5h7v7H4z" fill={c} />
              <rect x=".5" y=".5" width="7" height="7" fill="#222" stroke={c} />
            </Icon>
          </BareButton>
          <BareButton aria-label="切换颜色">
            <Icon size={12}>
              <path d="M3 3.500h2c3 0 4 2 4 5" stroke={c} strokeWidth="1.500" />
              <path d="M0 3.500L3.500 1v5zM9 11.500L6.500 8h5z" fill={c} />
            </Icon>
          </BareButton>
        </SwatchIcons>
        <Swatches>
          <Swatch $back aria-label="背景色" />
          <Swatch aria-label="前景色" />
        </Swatches>
        <ToolButton aria-label="快速蒙版">{tools.mask}</ToolButton>
        <ToolButton aria-label="屏幕模式" $flyout>{tools.screen}</ToolButton>
      </ToolList>
    </ToolColumn>
  );
}

function TimelinePanel() {
  return (
    <Timeline>
      <PanelTabs names={["时间轴"]} />
      <Track $h={38}>
        <TrackHead>
          <Transport $w={30} aria-label="第一帧"><Play d="M0 1l7 4.500L0 10zM9 1h2v9H9z" /></Transport>
          <Transport aria-label="上一帧"><Play d="M7 1v9L0 5.500zM8 1h1v9H8zM10 1h2v9h-2z" /></Transport>
          <Transport $w={34} aria-label="播放"><Play d="M2 0l9 5.500L2 11z" /></Transport>
          <Transport $w={30} aria-label="下一帧"><Play d="M0 1h2v9H0zM3 1h1v9H3zM5 1l7 4.500L5 10z" /></Transport>
          <Transport $w={30} aria-label="静音"><Play w={8} d="M0 3.500h3L6.500 0v11L3 7.500H0z" /></Transport>
          <TransportRule />
          <Transport $w={26} aria-label="拆分">
            <Icon size={17} h={13}>
              <circle cx="3" cy="3" r="2" stroke="#9a9a9a" strokeWidth="1.500" />
              <circle cx="3" cy="10" r="2" stroke="#9a9a9a" strokeWidth="1.500" />
              <path d="M5 4l11 6.500M5 9l11-7" stroke="#9a9a9a" strokeWidth="2" />
            </Icon>
          </Transport>
          <Transport $w={38} aria-label="过渡">
            <Icon size={13}>
              <rect x=".5" y=".5" width="12" height="12" fill="#3c3c3c" stroke={g} />
              <path d="M12 1v11H1z" fill="#8c8c8c" />
            </Icon>
          </Transport>
        </TrackHead>
        <Spacer />
        <ScrollGutter $w={44} $plain $ruled />
      </Track>
      <Track $h={42}>
        <TrackHead>
          <FilmButton aria-label="媒体">
            <Icon size={11} h={13}>
              <path d="M0 0h11v13H0z" fill={c} />
              <path d="M3 1h5v4.500H3zM3 7h5v5H3z" fill="#4a4a4a" />
              <path d="M1.500 1v11M9.500 1v11" stroke="#4a4a4a" strokeDasharray="1 1.500" />
            </Icon>
            <DownArrow />
          </FilmButton>
        </TrackHead>
        <Spacer />
        <AddCell aria-label="添加媒体">
          <Icon size={11}><path d="M5.500 0v11M0 5.500h11" stroke="#eee" strokeWidth="2" /></Icon>
        </AddCell>
        <ScrollGutter $w={16} />
      </Track>
      <Lane>
        <Spacer />
        <ScrollGutter $w={16} />
      </Lane>
      <TimelineFoot>
        <FootLeft>
          <Icon size={17} h={8}>
            <path d="M.5 1.500h4v6h-4zM6.500 1.500h4v6h-4zM12.500 1.500h4v6h-4zM0 .5h5M6 .5h5M12 .5h5" stroke={g} />
          </Icon>
          <Icon size={14} h={11}>
            <path d="M0 11c0-5 3-8 8-8V0l6 5-6 5V7c-4 0-6 1-8 4z" fill={g} />
          </Icon>
        </FootLeft>
        <FootZoom>
          <Icon size={10} h={6}><path d="M0 5.500h10M1 5l2-2 1 1 2-3 3 4" stroke={g} /></Icon>
          <ZoomTrack type="range" aria-label="时间轴缩放" defaultValue={0} />
          <Icon size={18} h={8}><path d="M0 7.500h18M1 7l5-4 2 2 3-4 6 6M8 6l3-5" stroke={g} /></Icon>
        </FootZoom>
        <Spacer />
        <ScrollGutter $w={16} $plain />
      </TimelineFoot>
    </Timeline>
  );
}

function RightSide() {
  return (
    <Right>
      <RightStrip><DoubleChevron left /><DoubleChevron /></RightStrip>
      <RightColumns>
        <Dock>
          <DockGroup>
            <Grip />
            <DockButton aria-label="历史记录">
              <Icon size={16} h={18}>
                <path d="M1.500 1.500h4v4h-4zM1.500 7.500h4v4h-4z" stroke={c} />
                <path d="M1 13h5v5H1zM8 2l6-1-1 6-2-2z" fill={c} />
                <path d="M12 4c4 4 2 9-2 12" stroke={c} strokeWidth="2" />
              </Icon>
            </DockButton>
          </DockGroup>
          <DockGroup>
            <Grip />
            <DockButton aria-label="属性">
              <Icon size={16} h={18}>
                <path d="M5 0l5 3v6l-5 3-5-3V3z" fill={c} />
                <path d="M0 3l5 3 5-3M5 6v6" stroke="#666" />
                <path d="M12 1h4v4h-4zM12 6h4v4h-4zM0 14h16v4H0z" fill={c} />
                <path d="M11 15h4l-2 2z" fill="#333" />
              </Icon>
            </DockButton>
          </DockGroup>
        </Dock>
        <Panels>
          <Panel>
            <PanelTabs names={["颜色", "色板"]} />
            <ColorBody>
              <ColorTop>
                <Swatches>
                  <Swatch $back aria-label="背景色" />
                  <Swatch aria-label="前景色" />
                </Swatches>
                <Channels>
                  {channels.map(([n, color]) => (
                    <Channel key={n}>
                      {n}
                      <ChannelSlider type="range" min={0} max={255} defaultValue={0} $color={color} aria-label={n} />
                      <NumberBox defaultValue="0" aria-label={`${n} 值`} />
                    </Channel>
                  ))}
                </Channels>
              </ColorTop>
              <Spectrum />
            </ColorBody>
          </Panel>
          <Panel>
            <PanelTabs names={["调整", "样式"]} />
            <AdjustBody>
              <AdjustTitle>添加调整</AdjustTitle>
              {adjustRows.map(([indent, ids], i) => (
                <AdjustRow key={i} $indent={indent}>
                  {ids.map((id) => (
                    <IconButton key={id} aria-label={id}>{adjust[id]}</IconButton>
                  ))}
                </AdjustRow>
              ))}
            </AdjustBody>
          </Panel>
          <Panel $grow>
            <PanelTabs names={["图层", "通道", "路径"]} />
            <LayerRow>
              <FilterCombo $w={71} $dim>
                <Icon size={11}>
                  <circle cx="6.500" cy="4.500" r="3.500" stroke="#c4c4c4" strokeWidth="1.500" />
                  <path d="M4 7l-3 3.500" stroke="#c4c4c4" strokeWidth="2" />
                </Icon>
                <ComboSelect $inset={21} aria-label="过滤类型"><option>类型</option></ComboSelect>
                <ComboArrows dim />
              </FilterCombo>
              <FilterIcons>
                {["image", "adj", "t", "vector", "smart"].map((id) => (
                  <IconButton key={id} aria-label={id}>{small[id]}</IconButton>
                ))}
              </FilterIcons>
              <FilterSwitch aria-label="过滤开关" />
            </LayerRow>
            <LayerRow>
              <Combo $w={110} $dim>
                <ComboSelect aria-label="混合模式"><option>正常</option></ComboSelect>
                <ComboArrows dim />
              </Combo>
              <FieldLabel htmlFor="opacity">不透明度:</FieldLabel>
              <Stepper>
                <StepperInput id="opacity" />
                <StepperButton aria-label="不透明度选项"><DownArrow color="#aaa" /></StepperButton>
              </Stepper>
            </LayerRow>
            <LayerRow>
              <LockLabel>锁定:</LockLabel>
              <LockIcons>
                {["pixels", "lockBrush", "lockMove", "lock"].map((id) => (
                  <IconButton key={id} $w={22} aria-label={id}>{small[id]}</IconButton>
                ))}
              </LockIcons>
              <FieldLabel htmlFor="fill">填充:</FieldLabel>
              <Stepper>
                <StepperInput id="fill" />
                <StepperButton aria-label="填充选项"><DownArrow color="#aaa" /></StepperButton>
              </Stepper>
            </LayerRow>
            <LayerList><ScrollGutter $w={15} /></LayerList>
            <LayerFoot>
              {["link", "fx", "layerMask", "adj", "folder", "page", "trash"].map((id) => (
                <FootButton key={id} aria-label={id}>{small[id]}</FootButton>
              ))}
            </LayerFoot>
          </Panel>
        </Panels>
      </RightColumns>
    </Right>
  );
}

function Preferences() {
  return (
    <Dialog role="dialog" aria-labelledby="prefs-title">
      <DialogHead>
        <DialogTitle id="prefs-title">首选项</DialogTitle>
        <BareButton aria-label="关闭">
          <Icon size={11}><path d="M.5.500l10 10M10.500.500l-10 10" stroke="#000" /></Icon>
        </BareButton>
      </DialogHead>
      <DialogBody>
        <Sections>
          {sections.map((s, i) => (
            <li key={s}><SectionItem $on={i === 0}>{s}</SectionItem></li>
          ))}
        </Sections>
        <Main>
          <FormRow>
            <FormLabel htmlFor="color-picker">拾色器(C):</FormLabel>
            <Picker $w={225}>
              <PickerSelect id="color-picker"><option>Adobe</option></PickerSelect>
              <PickerArrow><Chevron /></PickerArrow>
            </Picker>
          </FormRow>
          <FormRow>
            <FormLabel htmlFor="hud-picker">HUD 拾色器(H):</FormLabel>
            <Picker $w={225} $open>
              <PickerSelect id="hud-picker">
                {hudChoices.map((h) => <option key={h}>{h}</option>)}
              </PickerSelect>
              <PickerArrow $open><Chevron /></PickerArrow>
              <Popup role="listbox" aria-label="HUD 拾色器">
                {hudChoices.map((h, i) => (
                  <PopupItem key={h} role="option" aria-selected={i === 0} $on={i === 0}>{h}</PopupItem>
                ))}
              </Popup>
            </Picker>
          </FormRow>
          <FormRow>
            <FormLabel htmlFor="interpolation">图像插值(I):</FormLabel>
            <Picker $w={225}>
              <PickerSelect id="interpolation"><option></option></PickerSelect>
              <PickerArrow><Chevron /></PickerArrow>
            </Picker>
          </FormRow>
          <OptionGroup>
            <OptionLegend>选项</OptionLegend>
            {options.map(([text, on]) => (
              <CheckRow key={text}>
                <Check type="checkbox" defaultChecked={on} />
                {text}
              </CheckRow>
            ))}
          </OptionGroup>
          <HistoryGroup>
            <HistoryLegend $w={105}>
              <CheckRow><Check type="checkbox" />历史记录(L)</CheckRow>
            </HistoryLegend>
            <HistoryRow>
              <HistoryLabel $w={108}>将记录项目存储到:</HistoryLabel>
              <RadioLabel><Radio type="radio" name="store" defaultChecked disabled />元数据(M)</RadioLabel>
            </HistoryRow>
            <HistoryRow>
              <HistoryLabel $w={108} />
              <RadioLabel><Radio type="radio" name="store" disabled />文本文件(T)</RadioLabel>
              <PushButton $w={91} disabled>选取(O)...</PushButton>
            </HistoryRow>
            <HistoryRow>
              <HistoryLabel $w={108} />
              <RadioLabel><Radio type="radio" name="store" disabled />两者兼有(B)</RadioLabel>
            </HistoryRow>
            <HistoryRow $late>
              <HistoryLabel as="label" htmlFor="log-items" $w={113}>编辑记录项目(E):</HistoryLabel>
              <Picker $w={116} $dim>
                <PickerSelect id="log-items" $boxed disabled><option>仅限工作进程</option></PickerSelect>
                <PickerArrow><Chevron dim /></PickerArrow>
              </Picker>
            </HistoryRow>
          </HistoryGroup>
          <ResetButton $w={166}>复位所有警告对话框(W)</ResetButton>
        </Main>
        <Actions>
          <PushButton $w={91} $main>确定</PushButton>
          <PushButton $w={91}>取消</PushButton>
          <PushButton $w={91}>上一个(P)</PushButton>
          <PushButton $w={91}>下一个(N)</PushButton>
        </Actions>
      </DialogBody>
      <Marker $x={252} $y={87} $w={189} $h={117} />
      <Marker $x={793} $y={20} $w={103} $h={42} />
      <PointerArrow width="110" height="42" viewBox="0 0 110 42" aria-hidden="true">
        <path d="M106 7L28 26" stroke="#f00" strokeWidth="3" strokeLinecap="round" />
        <path d="M2 31L26 19l-1 6 6 7z" fill="#f00" />
      </PointerArrow>
    </Dialog>
  );
}

function FloatingMeter() {
  return (
    <Meter>
      <MeterArt width="76" height="78" viewBox="0 0 76 78" aria-hidden="true">
        <path d="M44 22h32v45H44z" fill="#2a2e3a" />
        <path d="M52 44h24" stroke="#1d212b" />
        <circle cx="31" cy="43" r="29" fill="#22364a" />
        <path d="M2 43h58a29 29 0 01-58 0z" fill="#15506c" />
        <path d="M10 40c4-3 7-1 9 2 4 3 10 1 12-1 4-6 18-9 22 2H16c-3 0-5-1-6-3zM18 36c0-3 2-5 4-6 2 5 1 7 0 9z" fill="#1f6474" />
        <circle cx="31" cy="43" r="29" stroke="#16222e" fill="none" />
        <path d="M34 15a28 28 0 11-20 50" stroke="#1fc8e0" strokeWidth="2" fill="none" />
        <path d="M68 32l4 5h-3v5h-2v-5h-3z" fill="#1d9bf0" />
        <path d="M68 60l4-5h-3v-5h-2v5h-3z" fill="#ff9a1c" />
        <path d="M65 14l-1-10 6 4 3-6 3 2v12z" fill="#ffd56a" />
        <path d="M61 22l3-10h12v10z" fill="#fff3c8" stroke="#e8a030" />
      </MeterArt>
      <MeterText>62<small>%</small></MeterText>
      <VipText>VIP</VipText>
    </Meter>
  );
}

export default function App() {
  return (
    <Window>
      <GlobalStyle />
      <MenuBar>
        <Logo>Ps</Logo>
        <Menus>{menus.map((m) => <MenuItem key={m}>{m}</MenuItem>)}</Menus>
        <WindowButtons>
          <WindowButton aria-label="最小化"><Icon size={10} h={4}><path d="M0 2h10" stroke="#eee" strokeWidth="3" /></Icon></WindowButton>
          <WindowButton aria-label="最大化"><Icon size={10} h={8}><rect x="1" y="1" width="8" height="6" stroke="#eee" strokeWidth="2" /></Icon></WindowButton>
          <WindowButton $wide aria-label="关闭"><Icon size={10} h={8}><path d="M1 0l8 8M9 0L1 8" stroke="#eee" strokeWidth="2" /></Icon></WindowButton>
        </WindowButtons>
      </MenuBar>
      <OptionsBar>
        <Grip $vertical />
        <PickerButton aria-label="吸管工具"><Eyedropper /><DownArrow /></PickerButton>
        <VRule />
        <OptionLabel htmlFor="sample-size">取样大小:</OptionLabel>
        <Combo $w={109}>
          <ComboSelect id="sample-size"><option>取样点</option></ComboSelect>
          <ComboArrows />
        </Combo>
        <OptionLabel htmlFor="sample" $lead>样本:</OptionLabel>
        <Combo $w={168}>
          <ComboSelect id="sample"><option>所有图层</option></ComboSelect>
          <ComboArrows />
        </Combo>
        <VRule />
        <DimLabel><DarkCheck type="checkbox" disabled />显示取样环</DimLabel>
        <Spacer />
        <Combo $w={106} $dim>
          <ComboSelect aria-label="工作区"><option>基本功能</option></ComboSelect>
          <ComboArrows dim />
        </Combo>
      </OptionsBar>
      <Work>
        <ToolPalette />
        <Center>
          <Canvas />
          <TimelinePanel />
        </Center>
        <RightSide />
      </Work>
      <Preferences />
      <FloatingMeter />
      <Notice>激活  Windows</Notice>
      <SiteMark>
        <svg width="44" height="42" viewBox="0 0 44 42" aria-hidden="true">
          <path d="M43 1C20 1 2 12 1 24c0 9 12 10 20 4 4-3 4-7-1-7-4 0-6 4-9 4-4 0-3-6 2-10C20 9 32 4 43 1z" fill="#1f77b4" />
          <path d="M26 17c14-4 20 2 15 10-5 8-18 13-37 13 12-2 24-7 29-13 3-4 1-8-7-10z" fill="#2c9a46" />
          <path d="M4 40c12-2 20-5 26-10l-6 2c-6 4-12 7-20 8z" fill="#c8c832" />
        </svg>
        <div>
          <SiteName>极光下载站</SiteName>
          <SiteUrl>www.xz7.com</SiteUrl>
        </div>
      </SiteMark>
    </Window>
  );
}
